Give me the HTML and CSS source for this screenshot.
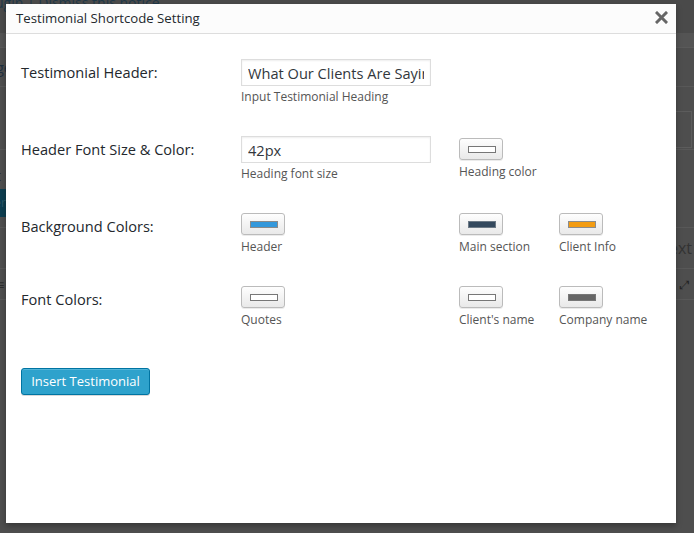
FILE: index.html
```html
<!DOCTYPE html>
<html>
<head>
<meta charset="utf-8">
<link rel="stylesheet" href="styles.css">
</head>
<body>
<div class="page">
  <div class="bg-row bg-notice"><span class="notice-text">Plugin | Dismiss this notice</span></div>
  <div class="bg-row bg-band"></div>
  <div class="bg-row bg-r1"><span class="bg-txt">Page</span></div>
  <div class="bg-row bg-r2"><span></span><span class="bg-box"></span></div>
  <div class="bg-row bg-r3"><div class="bg-col"><span class="bg-txt">Edit</span><span class="bg-btn">Filter</span></div></div>
  <div class="bg-row bg-r4"><span></span><span class="bg-txt">Text</span></div>
  <div class="bg-row bg-r5"><span class="bg-ham">&#8801;</span><span class="bg-icon">&#10530;</span></div>
</div>

<div class="modal">
  <div class="modal-head">
    <span class="modal-title">Testimonial Shortcode Setting</span>
    <svg class="close" width="13" height="13" viewBox="0 0 13 13"><path d="M2 2 L11 11 M11 2 L2 11" stroke="#666" stroke-width="3" stroke-linecap="square"/></svg>
  </div>
  <div class="modal-body">
    <div class="row row-1">
      <div class="label">Testimonial Header:</div>
      <div class="field wide">
        <input class="text-input" type="text" value="What Our Clients Are Saying">
        <div class="desc">Input Testimonial Heading</div>
      </div>
    </div>
    <div class="row row-2">
      <div class="label">Header Font Size &amp; Color:</div>
      <div class="field">
        <input class="text-input" type="text" value="42px">
        <div class="desc">Heading font size</div>
      </div>
      <div class="field pick-field">
        <button class="color-btn"><span class="swatch sw-white"></span></button>
        <div class="desc">Heading color</div>
      </div>
    </div>
    <div class="row row-3">
      <div class="label lbl-btn">Background Colors:</div>
      <div class="field">
        <button class="color-btn"><span class="swatch sw-blue"></span></button>
        <div class="desc">Header</div>
      </div>
      <div class="field">
        <button class="color-btn"><span class="swatch sw-navy"></span></button>
        <div class="desc">Main section</div>
      </div>
      <div class="field">
        <button class="color-btn"><span class="swatch sw-orange"></span></button>
        <div class="desc">Client Info</div>
      </div>
    </div>
    <div class="row row-4">
      <div class="label lbl-btn">Font Colors:</div>
      <div class="field">
        <button class="color-btn"><span class="swatch sw-white"></span></button>
        <div class="desc">Quotes</div>
      </div>
      <div class="field">
        <button class="color-btn"><span class="swatch sw-white"></span></button>
        <div class="desc">Client's name</div>
      </div>
      <div class="field">
        <button class="color-btn"><span class="swatch sw-gray"></span></button>
        <div class="desc">Company name</div>
      </div>
    </div>
    <button class="insert-btn">Insert Testimonial</button>
  </div>
</div>
</body>
</html>
```

FILE: styles.css
```css
html, body {
  margin: 0;
  padding: 0;
}
body {
  width: 694px;
  height: 533px;
  overflow: hidden;
  background: #4e4e4e;
  font-family: "Open Sans", "Liberation Sans", sans-serif;
  position: relative;
}

/* dimmed admin page behind the modal */
.page {
  display: flex;
  flex-direction: column;
}
.bg-row {
  display: flex;
  justify-content: space-between;
  align-items: center;
  border-bottom: 1px solid #585858;
  box-sizing: border-box;
}
.bg-notice {
  height: 33px;
  align-items: flex-start;
  border-bottom: none;
  background: #4a4a4a;
}
.notice-text {
  margin-top: -7px;
  margin-left: -17px;
  font-size: 14px;
  color: #1f3848;
  white-space: nowrap;
}
.bg-band {
  height: 15px;
  background: #545454;
  border-bottom: 1px solid #5a5a5a;
}
.bg-r1 { height: 39px; }
.bg-r2 { height: 63px; padding-top: 24px; align-items: flex-start; }
.bg-r3 { height: 78px; }
.bg-r4 { height: 41px; }
.bg-r5 { height: 31px; }
.bg-txt {
  font-size: 14px;
  color: #2a2a2a;
  white-space: nowrap;
}
.bg-r1 .bg-txt { margin-left: -20px; color: #1f3040; }
.bg-r4 .bg-txt { margin-right: 2px; font-size: 16px; color: #333; }
.bg-box {
  width: 60px;
  height: 35px;
  border: 1px solid #5c5c5c;
  margin-right: 2px;
}
.bg-col {
  display: flex;
  flex-direction: column;
  gap: 4px;
  padding-top: 6px;
}
.bg-col .bg-txt { margin-left: -24px; }
.bg-btn {
  display: block;
  width: 40px;
  height: 28px;
  margin-left: -34px;
  background: #0d3e50;
  color: #2a5a6a;
  font-size: 12px;
  line-height: 28px;
  text-align: right;
}
.bg-ham {
  margin-left: -4px;
  color: #2c2c2c;
  font-size: 14px;
}
.bg-icon {
  color: #222;
  font-size: 12px;
  margin-right: 4px;
}

/* modal */
.modal {
  position: absolute;
  left: 6px;
  top: 4px;
  width: 670px;
  height: 519px;
  background: #fff;
  box-shadow: 0 3px 6px rgba(0, 0, 0, 0.3);
  display: flex;
  flex-direction: column;
}
.modal-head {
  height: 29px;
  box-sizing: content-box;
  background: #fcfcfc;
  border-bottom: 1px solid #ddd;
  display: flex;
  align-items: center;
  justify-content: space-between;
  padding: 0 8px 0 10px;
}
.modal-title {
  font-size: 13.2px;
  color: #23282d;
  font-weight: 400;
  margin-top: -1px;
}
.close {
  display: block;
  margin-top: -3px;
}

.modal-body {
  padding: 25px 15px 0 15px;
}
.row {
  display: grid;
  grid-template-columns: 220px 218px 100px 1fr;
  align-items: start;
}
.row-1 { height: 77px; }
.row-2 { height: 77px; }
.row-3 { height: 73px; }
.row-4 { height: 82px; }

.label {
  font-size: 14.6px;
  color: #23282d;
  line-height: 27px;
}
.lbl-btn {
  line-height: 22px;
  padding-top: 2px;
}
.field {
  display: flex;
  flex-direction: column;
  align-items: flex-start;
}
.pick-field { padding-top: 2px; }
.wide { grid-column: 2 / 4; }

.text-input {
  width: 190px;
  height: 27px;
  box-sizing: border-box;
  margin: 0;
  border: 1px solid #ddd;
  box-shadow: inset 0 1px 2px rgba(0, 0, 0, 0.07);
  padding: 0 6px;
  font-family: "Open Sans", "Liberation Sans", sans-serif;
  font-size: 14.6px;
  color: #32373c;
  background: #fff;
  outline: none;
}
.desc {
  font-size: 12px;
  color: #555;
  line-height: 17px;
  margin-top: 2px;
  white-space: nowrap;
}
.color-btn {
  width: 44px;
  height: 22px;
  box-sizing: border-box;
  margin: 0;
  padding: 0;
  border: 1px solid #bbb;
  border-radius: 3px;
  background: linear-gradient(#fefefe, #e9e9e9);
  box-shadow: 0 1px 0 rgba(0, 0, 0, 0.08);
  display: flex;
  align-items: center;
  justify-content: center;
}
.color-btn + .desc { margin-top: 3px; }
.swatch {
  display: block;
  width: 28px;
  height: 7px;
  box-sizing: border-box;
  border: 1px solid #888;
  margin-left: 1px;
}
.sw-white { background: #fff; border-color: #777; }
.sw-blue { background: #3498db; border-color: #8a8a8a; }
.sw-navy { background: #34495e; border-color: #6d7a86; }
.sw-orange { background: #f39c12; border-color: #8c8c8c; }
.sw-gray { background: #666; border-color: #777; }

.insert-btn {
  display: block;
  width: 129px;
  height: 27px;
  box-sizing: border-box;
  margin: 0;
  padding: 0;
  white-space: nowrap;
  text-align: center;
  border: 1px solid #0074a2;
  border-radius: 3px;
  background: #2ea2cc;
  box-shadow: inset 0 1px 0 rgba(120, 200, 230, 0.5), 0 1px 0 rgba(0, 0, 0, 0.15);
  color: #fff;
  font-family: "Open Sans", "Liberation Sans", sans-serif;
  font-size: 13px;
  line-height: 25px;
}
```
